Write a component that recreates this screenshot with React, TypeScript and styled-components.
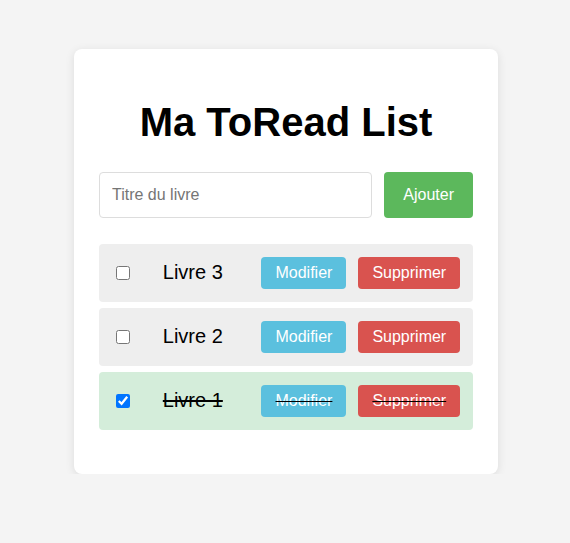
import styled, { createGlobalStyle } from 'styled-components';

const GlobalStyle = createGlobalStyle`
  body {
    margin: 0;
    background: #f4f4f4;
    font-family: 'Liberation Sans', Arial, sans-serif;
  }
`;

const Page = styled.div`
  padding: 49px 0 0 2px;
`;

const Card = styled.div`
  box-sizing: border-box;
  width: 424px;
  margin: 0 auto;
  padding: 24px 25px 44px;
  background: #fff;
  border-radius: 8px;
  box-shadow: 0 2px 10px rgba(0, 0, 0, 0.1);
`;

const Title = styled.h1`
  margin: 27px 0 27px;
  font-size: 40px;
  font-weight: bold;
  text-align: center;
  color: #000;
`;

const Form = styled.div`
  display: flex;
  gap: 12px;
`;

const Input = styled.input`
  flex: 1;
  min-width: 0;
  height: 46px;
  box-sizing: border-box;
  padding: 0 12px;
  border: 1px solid #ddd;
  border-radius: 4px;
  font-family: inherit;
  font-size: 16px;
  color: #000;
  &::placeholder {
    color: #757575;
  }
`;

const Button = styled.button<{ $tone: string; $wide?: boolean }>`
  border: none;
  border-radius: 4px;
  background: ${(p) => p.$tone};
  color: #fff;
  font-family: inherit;
  font-size: 16px;
  line-height: 18px;
  padding: ${(p) => (p.$wide ? '0 19px' : '7px 14px')};
  text-decoration: inherit;
  cursor: pointer;
`;

const List = styled.ul`
  list-style: none;
  margin: 26px 0 0;
  padding: 0;
  display: flex;
  flex-direction: column;
  gap: 6.4px;
`;

const Row = styled.li<{ $done: boolean }>`
  display: flex;
  align-items: center;
  padding: 12.8px;
  border-radius: 4px;
  background: ${(p) => (p.$done ? '#d4edda' : '#eee')};
  color: #000;
  text-decoration: ${(p) => (p.$done ? 'line-through' : 'none')};
`;

const Check = styled.input`
  width: 14px;
  height: 14px;
  margin: 3px 3px 3px 4px;
`;

const Name = styled.span`
  margin-left: 30px;
  font-size: 20px;
`;

const Actions = styled.div`
  display: flex;
  gap: 12px;
  margin-left: auto;
`;

const books = [
  { title: 'Livre 3', done: false },
  { title: 'Livre 2', done: false },
  { title: 'Livre 1', done: true },
];

export default function App() {
  return (
    <Page>
      <GlobalStyle />
      <Card>
        <Title>Ma ToRead List</Title>
        <Form>
          <Input placeholder="Titre du livre" />
          <Button $tone="#5cb85c" $wide>
            Ajouter
          </Button>
        </Form>
        <List>
          {books.map((b) => (
            <Row key={b.title} $done={b.done}>
              <Check type="checkbox" defaultChecked={b.done} />
              <Name>{b.title}</Name>
              <Actions>
                <Button $tone="#5bc0de">Modifier</Button>
                <Button $tone="#d9534f">Supprimer</Button>
              </Actions>
            </Row>
          ))}
        </List>
      </Card>
    </Page>
  );
}
